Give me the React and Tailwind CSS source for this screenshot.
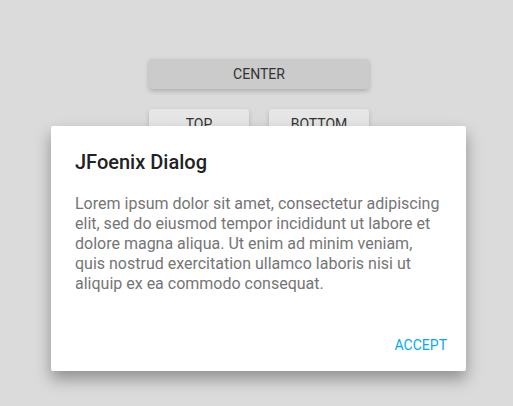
// <== IMPORTS ==>
import React from "react";

const App = () => {
  return (
    <>
      {/* PAGE WRAPPER */}
      <section
        className="relative w-[513px] h-[406px] bg-[#dbdbdb] overflow-hidden"
        style={{ fontFamily: "Roboto, 'Liberation Sans', sans-serif" }}
      >
        {/* BUTTONS SECTION */}
        <div className="flex flex-col gap-5 pt-[59px] ml-[149px] w-[220px]">
          {/* CENTER BUTTON */}
          <button className="h-[30px] w-full rounded-[3px] bg-[#cbcbcb] text-[14px] text-[#333] shadow-[0_2px_5px_rgba(0,0,0,0.22)]">
            CENTER
          </button>
          {/* TOP & BOTTOM BUTTONS */}
          <div className="flex gap-5">
            <button className="h-[30px] w-[100px] rounded-[3px] bg-[#e6e6e6] text-[14px] text-[#333] shadow-[0_2px_5px_rgba(0,0,0,0.18)]">
              TOP
            </button>
            <button className="h-[30px] w-[100px] rounded-[3px] bg-[#e6e6e6] text-[14px] text-[#333] shadow-[0_2px_5px_rgba(0,0,0,0.18)]">
              BOTTOM
            </button>
          </div>
        </div>
        {/* DIALOG */}
        <div className="absolute left-[51px] top-[126px] w-[415px] h-[245px] bg-white rounded-[2px] shadow-[0_8px_16px_rgba(0,0,0,0.35)] flex flex-col">
          {/* HEADING */}
          <h2 className="px-6 pt-6 text-[20px] leading-6 font-medium text-[#222]">
            JFoenix Dialog
          </h2>
          {/* BODY */}
          <p className="px-6 pt-5 text-[16px] leading-5 text-[#757575]">
            Lorem ipsum dolor sit amet, consectetur adipiscing elit, sed do
            eiusmod tempor incididunt ut labore et dolore magna aliqua. Ut enim
            ad minim veniam, quis nostrud exercitation ullamco laboris nisi ut
            aliquip ex ea commodo consequat.
          </p>
          {/* ACTIONS */}
          <div className="mt-auto flex justify-end pr-[11px] pb-2">
            <button className="h-9 px-2 text-[14px] text-[#03a9f4]">
              ACCEPT
            </button>
          </div>
        </div>
      </section>
    </>
  );
};

export default App;
